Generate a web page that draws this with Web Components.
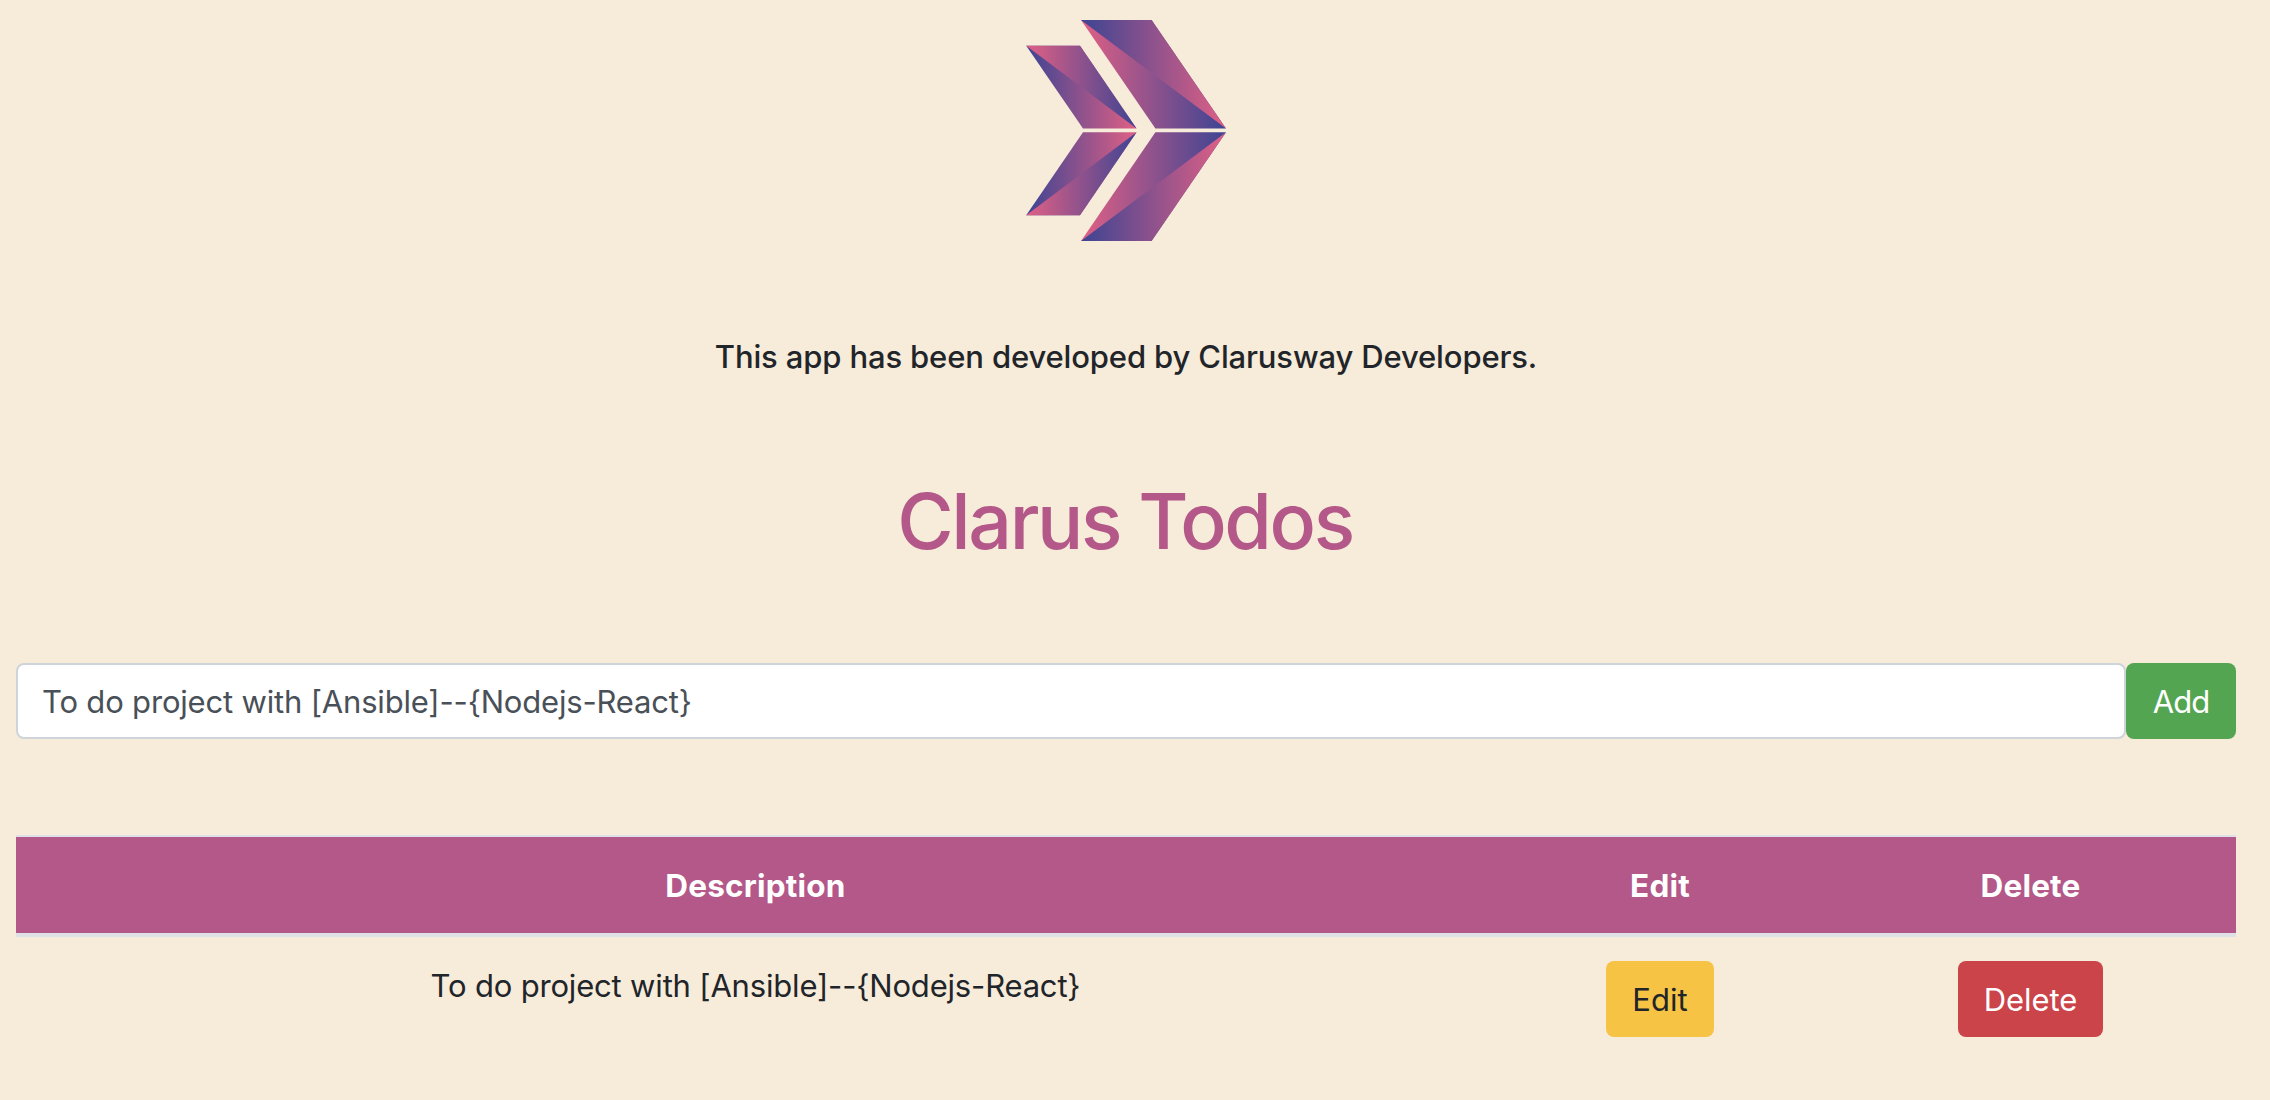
<!DOCTYPE html>
<html lang="en">
<head>
<meta charset="utf-8">
<title>Clarus Todos</title>
<style>
  html, body { margin: 0; height: 100%; }
  body {
    background: #f7ebda; color: #212529; overflow: hidden;
    font: 400 31px/48px Inter, "Liberation Sans", sans-serif;
  }
</style>
</head>
<body>
<todo-app></todo-app>
<script>
class UiElement extends HTMLElement {
  connectedCallback() {
    if (!this.shadowRoot) this.attachShadow({ mode: 'open' }).innerHTML = this.constructor.markup;
  }
}

customElements.define('clarus-logo', class extends UiElement {
  static markup = `
    <style>:host { display: block; width: 201px; height: 222px; } svg { display: block; }</style>
    <svg width="201" height="222" viewBox="1026 20 201 222" role="img" aria-label="Clarusway">
      <defs>
        <linearGradient id="cool"><stop offset="0" stop-color="#3d4493"/><stop offset="1" stop-color="#e06085"/></linearGradient>
        <linearGradient id="warm"><stop offset="0" stop-color="#e06085"/><stop offset="1" stop-color="#3d4493"/></linearGradient>
      </defs>
      <path fill="url(#warm)" d="M1081 20L1151.6 20L1226 128.6H1155.4Z"/>
      <path fill="url(#cool)" d="M1081 20H1151.6L1226 128.6Z"/>
      <path fill="url(#cool)" d="M1026.2 45.8H1080L1136.6 128.6H1083Z"/>
      <path fill="url(#warm)" d="M1026.2 45.8H1080L1136.6 128.6Z"/>
      <path fill="url(#warm)" d="M1226 132.2H1155.4L1081 241H1151.6Z"/>
      <path fill="url(#cool)" d="M1226 132.2L1151.6 241H1081Z"/>
      <path fill="url(#cool)" d="M1136.6 132.2H1083L1026.2 215.2H1080Z"/>
      <path fill="url(#warm)" d="M1136.6 132.2L1080 215.2H1026.2Z"/>
      <path fill="url(#warm)" d="M1136.6 132.2H1083L1026.2 215.2Z" opacity="0"/>
    </svg>`;
});

customElements.define('todo-button', class extends UiElement {
  static markup = `
    <style>
      :host { display: inline-flex; box-sizing: border-box; height: 76px; flex: none; }
      button {
        width: 100%; height: 100%; border: 0; border-radius: 8px; padding: 2px 0 0; cursor: pointer;
        font: inherit; letter-spacing: inherit; color: #fff; background: #54a551; text-align: center;
      }
      :host([kind=edit]) button { background: #f6c344; color: #212529; }
      :host([kind=delete]) button { background: #cb444a; }
    </style>
    <button type="button"><slot></slot></button>`;
});

customElements.define('todo-form', class extends UiElement {
  static markup = `
    <style>
      :host { display: flex; height: 76px; }
      .field {
        flex: 1; box-sizing: border-box; border: 2px solid #ced4da; border-radius: 8px;
        background: #fff; color: #495057; padding: 13px 24px 11px; letter-spacing: -.18px; white-space: nowrap;
      }
      todo-button { width: 110px; letter-spacing: -.9px; }
    </style>
    <div class="field" role="textbox" contenteditable="true" spellcheck="false"><slot></slot></div>
    <todo-button kind="add">Add</todo-button>`;
});

customElements.define('todo-row', class extends UiElement {
  static markup = `
    <style>
      :host { display: grid; grid-template-columns: 1479px 330px 1fr; border-top: 2px solid #dee2e6; }
      ::slotted(*) { padding: 24px; text-align: center; }
      :host([head]) { background: #b35888; background-clip: padding-box; color: #fff; border-bottom: 4px solid #dee2e6; font-size: 31.5px; font-weight: 700; letter-spacing: .2px; }
      :host([head]) ::slotted(*) { padding: 25px 24px 23px; }
      :host(:not([head])) { border-top: 0; }
    </style>
    <slot></slot>`;
});

customElements.define('todo-app', class extends UiElement {
  static markup = `
    <style>
      :host { display: flex; flex-direction: column; padding: 20px 34px 0 16px; }
      clarus-logo { align-self: center; }
      .credit, h1 { margin: 0; text-align: center; font-weight: 500; }
      .credit { font-size: 31px; line-height: 48px; letter-spacing: -.14px; margin-top: 91px; }
      h1 { color: #b35888; font-size: 77px; line-height: 96px; letter-spacing: -2.37px; text-indent: -2px; margin-top: 92px; }
      todo-form { margin-top: 94px; }
      .table { margin-top: 96px; }
      .table .task { letter-spacing: -.18px; padding-top: 25px; }
      .edit { width: 108px; }
      .delete { width: 145px; letter-spacing: -.1px; }
    </style>
    <clarus-logo></clarus-logo>
    <h4 class="credit">This app has been developed by Clarusway Developers.</h4>
    <h1>Clarus Todos</h1>
    <todo-form>To do project with [Ansible]--{Nodejs-React}</todo-form>
    <div class="table">
      <todo-row head><div>Description</div><div>Edit</div><div>Delete</div></todo-row>
      <todo-row>
        <div class="task">To do project with [Ansible]--{Nodejs-React}</div>
        <div><todo-button kind="edit" class="edit">Edit</todo-button></div>
        <div><todo-button kind="delete" class="delete">Delete</todo-button></div>
      </todo-row>
    </div>`;
});
</script>
</body>
</html>
